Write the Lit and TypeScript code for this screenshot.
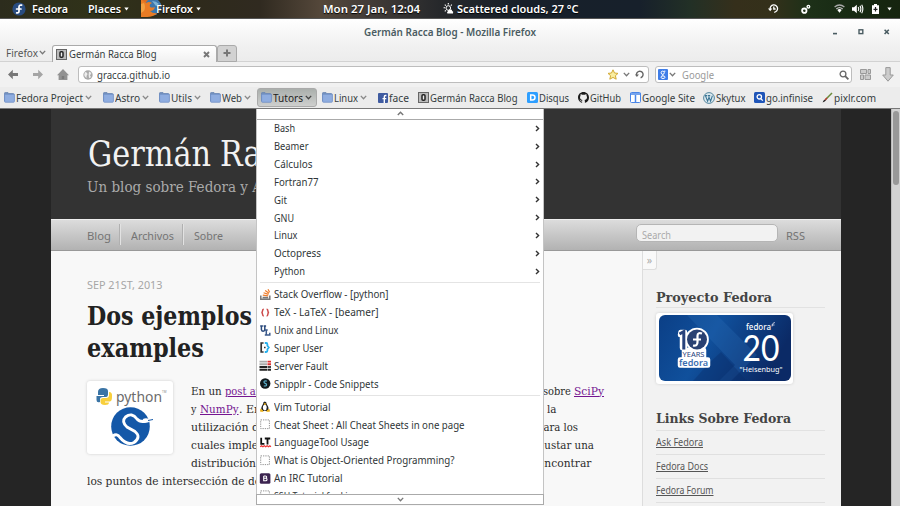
import { LitElement, html, css, svg, nothing } from "lit";
import { customElement, property, query } from "lit/decorators.js";

/** One line of text whose glyphs are condensed or widened to occupy a given width. */
@customElement("fit-text")
class FitText extends LitElement {
  @property({ type: Number }) w = 0;
  @query("span") box!: HTMLSpanElement;
  static styles = css`
    :host { display: inline-block; white-space: nowrap; flex: none; }
    span { display: inline-block; white-space: pre; transform-origin: 0 50%; text-decoration: inherit; }
  `;
  updated() {
    const natural = this.box.offsetWidth;
    if (!natural || !this.w) return;
    this.box.style.transform = `scaleX(${this.w / this.box.getBoundingClientRect().width})`;
    this.box.style.marginRight = `${this.w - natural}px`;
  }
  render() {
    return html`<span><slot></slot></span>`;
  }
}

const icon = (w: number, h: number, vb: string, body: unknown) =>
  html`<svg width=${w} height=${h} viewBox=${vb} fill="none">${body}</svg>`;

const chevron = (c = "#777") => icon(7, 5, "0 0 7 5", svg`<path d="M.8 .9 3.5 3.8 6.2 .9" stroke=${c} stroke-width="1.3"/>`);

const folder = icon(11, 11, "0 0 11 11", svg`
  <path d="M.5 2V1.2Q.5.6 1.1.6H4l.8 1h4.4q.6 0 .6.6V9H.5z" fill="#7692bd" stroke="#6784b2" stroke-width=".8"/>
  <path d="M.6 2.2h9.8v7.2q0 .9-.9.9H1.5q-.9 0-.9-.9z" fill="#8fade0" stroke="#6c8cc4" stroke-width=".7"/>`);
const octo = icon(11, 11, "0 0 11 11", svg`
  <rect x=".5" y=".5" width="10" height="10" fill="#bbb" stroke="#666"/>
  <rect x="4" y="2.8" width="3" height="5.4" rx="1" stroke="#222" stroke-width="1.5" fill="#eee"/>`);
const fb = icon(10, 10, "0 0 10 10", svg`
  <rect width="10" height="10" rx="1" fill="#3f5ba0"/><path d="M8.4 2.5H7.5Q6.3 2.5 6.3 3.7V10M4.5 5.6H8.3" stroke="#fff" stroke-width="1.4"/>`);
const disqus = icon(11, 11, "0 0 11 11", svg`
  <rect width="11" height="11" rx="1.5" fill="#2e9fff"/><path d="M3.7 3H5.3Q8 3 8 5.5T5.3 8H3.7z" stroke="#fff" stroke-width="1.5"/>`);
const github = icon(11, 11, "0 0 16 16", svg`
  <path fill="#1b1b1b" d="M8 0C3.58 0 0 3.58 0 8c0 3.54 2.29 6.53 5.47 7.59.4.07.55-.17.55-.38 0-.19-.01-.82-.01-1.49-2.01.37-2.53-.49-2.69-.94-.09-.23-.48-.94-.82-1.13-.28-.15-.68-.52-.01-.53.63-.01 1.08.58 1.23.82.72 1.21 1.87.87 2.33.66.07-.52.28-.87.51-1.07-1.78-.2-3.64-.89-3.64-3.95 0-.87.31-1.59.82-2.15-.08-.2-.36-1.02.08-2.12 0 0 .67-.21 2.2.82.64-.18 1.32-.27 2-.27s1.36.09 2 .27c1.53-1.04 2.2-.82 2.2-.82.44 1.1.16 1.92.08 2.12.51.56.82 1.27.82 2.15 0 3.07-1.87 3.75-3.65 3.95.29.25.54.73.54 1.48 0 1.07-.01 1.93-.01 2.2 0 .21.15.46.55.38A8.01 8.01 0 0 0 16 8c0-4.42-3.58-8-8-8z"/>`);
const gsite = icon(11, 11, "0 0 11 11", svg`
  <rect x=".5" y=".5" width="10" height="10" rx="1" fill="#fff" stroke="#4a86e8"/><path d="M0 2H11M5.5 3V10" stroke="#4a86e8" stroke-width="1.5"/>`);
const wp = icon(12, 12, "0 0 12 12", svg`
  <circle cx="6" cy="6" r="5.4" fill="#dbe9ef" stroke="#56879e" stroke-width="1"/><path d="M2.4 3.6 4.6 9.2 6 5.2 7.6 9.2 9.4 3.6M2 3.6H4.3M5 3.6H7.2" stroke="#3b7595" stroke-width="1.1"/>`);
const infin = icon(11, 11, "0 0 11 11", svg`
  <rect width="11" height="11" rx="1.5" fill="#1f55b8"/><circle cx="5.3" cy="4.8" r="2.2" stroke="#fff" stroke-width="1.3"/><path d="m6.8 6.6 2 2" stroke="#fff" stroke-width="1.3"/>`);
const pixlr = icon(11, 11, "0 0 11 11", svg`
  <path d="M.6 10.4Q1 8.2 3.6 7L4.2 8Q3 10 .6 10.4z" fill="#222"/><path d="M3.6 7.6 10 1" stroke="#6b8a3a" stroke-width="1.5"/><path d="M3 8 5 6" stroke="#b33" stroke-width="1.2"/>`);

type Mark = { cls?: string; ic: unknown; t: string; w: number; chev?: boolean };
const marks: Mark[] = [
  { ic: folder, t: "Fedora Project", w: 67, chev: true },
  { ic: folder, t: "Astro", w: 25, chev: true },
  { ic: folder, t: "Utils", w: 21, chev: true },
  { ic: folder, t: "Web", w: 20, chev: true },
  { ic: folder, t: "Tutors", w: 30, chev: true, cls: "open" },
  { ic: folder, t: "Linux", w: 24, chev: true },
  { ic: fb, t: "face", w: 20 },
  { ic: octo, t: "Germán Racca Blog", w: 87.5 },
  { ic: disqus, t: "Disqus", w: 30 },
  { ic: github, t: "GitHub", w: 31 },
  { ic: gsite, t: "Google Site", w: 53 },
  { ic: wp, t: "Skytux", w: 29.5 },
  { ic: infin, t: "go.infinise", w: 47 },
  { ic: pixlr, t: "pixlr.com", w: 42 },
];

const so = icon(11, 11, "0 0 11 11", svg`
  <path d="M.8 6.5V10.2H9.8V6.5M2.6 8.4H8.2" stroke="#777" stroke-width="1.5"/><path d="M2.8 6.1 8.2 6.9M3.6 3.8 8.5 5.4M5.2 1.4 9 4.2M8 .2 9.6 3.2" stroke="#ee7d2c" stroke-width="1.2"/>`);
const tex = icon(11, 11, "0 0 11 11", svg`
  <path d="M3.8 2.2Q2.6 2.2 2.6 3.6 2.6 5.4 1.4 5.6 2.6 5.8 2.6 7.6 2.6 9 3.8 9M6.6 2.2Q7.8 2.2 7.8 3.6 7.8 5.4 9 5.6 7.8 5.8 7.8 7.6 7.8 9 6.6 9" stroke="#cc4a4a" stroke-width="1.5"/>`);
const unix = icon(11, 11, "0 0 11 11", svg`
  <path d="M.2.9H2.9M1.4 1V4.6Q1.7 6.3 3.1 6.3 4.8 6.3 4.8 4.6V1M3.6.9H6.1" stroke="#2b4a7c" stroke-width="1.5"/><path d="M4.8 4.9H7.7M6.3 4.9V10M4.8 10H9.8V7.8" stroke="#3d5b8c" stroke-width="1.5"/>`);
const su = icon(11, 11, "0 0 11 11", svg`
  <path d="M3.6 1H1.2V10H3.6" stroke="#333" stroke-width="1.7"/><path d="M4 5.5H5.6" stroke="#333" stroke-width="1.3"/><path d="M4.8 1H6.2Q7.4 1 7.4 2.4V3.8L8.8 5.5 7.4 7.2V8.6Q7.4 10 6.2 10H4.8" stroke="#25b0ee" stroke-width="1.8"/>`);
const sf = icon(11, 11, "0 0 11 11", svg`
  <path d="M-.5 1.6H7M-.5 4.3H7" stroke="#aaa" stroke-width="1.9"/><path d="M-.5 7H7M-.5 9.7H7M7.5 9.7H11" stroke="#222" stroke-width="2.1"/><path d="M7.5 1.6H11M7.5 4.3H11" stroke="#d33" stroke-width="1.9"/><path d="M7.5 7H11" stroke="#444" stroke-width="2"/>`);
const snip = icon(11, 11, "0 0 11 11", svg`
  <circle cx="5.2" cy="5.5" r="5.2" fill="#10181c"/><path d="M6.8 3.1Q4 2.4 4 4 4 5 5.3 5.4 6.6 5.9 6.6 7 6.4 8.5 3.8 7.8" stroke="#5ab0cc" stroke-width="1.2"/>`);
const tux = icon(11, 11, "0 0 11 11", svg`
  <path d="M4.8.4Q6.7.4 6.7 3 8.7 5.5 8.5 8.5L7.2 10H2.8L1.2 8.6Q1.3 5.4 3 3 3 .4 4.8.4z" fill="#222"/><ellipse cx="4.8" cy="6.6" rx="1.9" ry="2.8" fill="#fff"/><path d="M.8 8 3.2 10.3H.5zM8.9 8 6.6 10.3H9.5zM4 2.8H5.8L4.9 3.8z" fill="#eab11c" stroke="#eab11c" stroke-width=".9"/>`);
const blank = icon(11, 11, "0 0 11 11", svg`<rect x=".7" y=".9" width="8.7" height="8.7" stroke="#888" stroke-width=".9" stroke-dasharray="1.3 1"/>`);
const lt = icon(11, 11, "0 0 11 11", svg`
  <path d="M1.2 .8V6.8H4.4M4.8 1.5H10.2M7.5 1.5V7.4" stroke="#111" stroke-width="1.8"/><path d="m.2 9.8 1.3-1 1.4 1 1.4-1 1.4 1 1.4-1 1.4 1 1.4-1 1 1" stroke="#e33" stroke-width="1.2"/>`);
const boot = icon(11, 11, "0 0 11 11", svg`
  <rect x="-.2" y=".2" width="10.6" height="10.6" rx="1.5" fill="#3c2450"/><path d="M3.7 3H5.5Q6.7 3 6.7 4.1T5.5 5.3H3.7V3V7.8H5.7Q7 7.8 7 6.5T5.7 5.3" stroke="#fff" stroke-width="1.1"/>`);

type Entry = [string, number, unknown?];
const groups: Entry[][] = [
  [["Bash", 21], ["Beamer", 34.5], ["Cálculos", 38.5], ["Fortran77", 44.5], ["Git", 13], ["GNU", 20], ["Linux", 23.5], ["Octopress", 47], ["Python", 31]],
  [["Stack Overflow - [python]", 114.5, so], ["TeX - LaTeX - [beamer]", 104.5, tex], ["Unix and Linux", 64.5, unix], ["Super User", 49, su], ["Server Fault", 54, sf], ["Snipplr - Code Snippets", 104.5, snip]],
  [["Vim Tutorial", 56.5, tux], ["Cheat Sheet : All Cheat Sheets in one page", 190.5, blank], ["LanguageTool Usage", 95, lt], ["What is Object-Oriented Programming?", 180.5, blank], ["An IRC Tutorial", 68.5, boot], ["SSH Tutorial for Linux", 89, blank]],
];

@customElement("app-root")
class AppRoot extends LitElement {
  static styles = css`
    * { box-sizing: border-box; }
    :host { display: flex; flex-direction: column; position: relative; width: 900px; height: 506px; overflow: hidden;
      font: 10.6px/14px "Noto Sans", sans-serif; color: #353c3e; background: #ededed; }
    svg { display: block; flex: none; overflow: visible; }
    .panel { height: 18.5px; flex: none; display: grid; align-items: center;
      grid-template-columns: 12px 20px 56px 53px 15px 167px 120px 325px 33px 33px 17.5px 20.5px 15px 1fr; color: #fff; font-weight: 600;
      background: linear-gradient(90deg, #2c2c1d 0, #303219 90px, #2e2a1b 190px, #302a20 260px, #54473a 320px, #423c38 370px, #26282b 440px, #17202a 520px, #17202b 640px, #223026 690px, #352f1b 735px, #34301a 770px, #1d3018 810px, #162912 860px, #16240f 900px);
      border-bottom: 1px solid #555; }
    .panel .cell { display: flex; align-items: center; gap: 3px; white-space: nowrap; font-size: 10.6px; text-shadow: 0 1px 1px #000; }
    .title { height: 26px; flex: none; display: grid; grid-template-columns: 364px 464px 26px 26px 1fr; align-items: center;
      background: linear-gradient(#fff, #f1f1f1); color: #4a5c62; font-weight: 600; font-size: 10.2px; }
    .tabs { height: 17.5px; flex: none; display: flex; background: linear-gradient(#f1f1f1, #ececec); border-bottom: 1px solid #d2d2d2; }
    .ff { width: 52px; padding-left: 6px; display: flex; align-items: center; gap: 1px; color: #555; }
    .tab { width: 165px; height: 18px; border: 1px solid #aaa; border-bottom: 0; border-radius: 3px 3px 0 0; display: flex; align-items: center; padding: 0 6px 0 3px; gap: 2px;
      background: linear-gradient(#fff, #f0f0f0); }
    .tab .x { margin-left: auto; }
    .plus { width: 20px; height: 17px; border: 1px solid #aaa; border-radius: 3px 3px 0 0; background: #d2d2d2; display: flex; align-items: center; justify-content: center; }
    .nav { height: 25px; flex: none; display: flex; align-items: center; background: #f1f1f1; }
    .ics { width: 78px; display: flex; align-items: center; padding-left: 7px; gap: 13px; }
    .field { height: 17px; border: 1px solid #bdbdbd; border-radius: 3px; background: #fff; display: flex; align-items: center; }
    .url { width: 571px; padding: 0 4px 0 4px; }
    .url fit-text { margin-left: 3.5px; }
    .url svg + svg { margin-left: 4px; }
    .url svg:last-child { margin-left: 5px; }
    .url fit-text + svg, .q fit-text + svg { margin-left: auto; }
    .q { width: 197px; margin-left: 6px; padding: 0 2px; gap: 1px; color: #999; }
    .q fit-text { margin-left: 5px; }
    .tools { display: flex; align-items: center; gap: 11px; margin-left: 8px; }
    .marks { height: 22px; flex: none; display: grid; align-items: center;
      grid-template-columns: 99px 56px 51px 50px 62px 56px 40px 109px 50.5px 52px 73.5px 50.5px 68px 1fr;
      padding-left: 4px; background: #ececec; border-bottom: 1px solid #777; }
    .mk { display: flex; align-items: center; gap: 1px; height: 19px; }
    .mk svg + svg, .mk fit-text + svg { margin-left: 1px; }
    .open { background: linear-gradient(#aaafac, #cecfce); border: 1px solid #aaa; border-radius: 3px; margin-left: -3px; width: 60px; padding-left: 3px; color: #222; }
    .view { flex: 1; display: flex; min-height: 0; background: #252525; padding-left: 51px; }
    .page { width: 790px; display: flex; flex-direction: column; }
    .bar { width: 9px; margin-left: auto; background: #d2d2d2; border-left: 1px solid #bbb; padding: 2px 1px 0; }
    .thumb { height: 74px; border-radius: 3px; background: #989898; }
    header { height: 110px; flex: none; background: #333; padding: 24px 0 0 37px; font-family: "DejaVu Serif Condensed", "DejaVu Serif", serif; color: #f2f2f2; overflow: hidden; }
    h1 { font-size: 34.5px; line-height: 42px; font-weight: 400; margin: 0; height: 42px; display: flex; gap: 9px; }
    .sub { font-size: 15px; line-height: 24px; color: #aaa; height: 24px; margin-left: -1px; }
    .menu { height: 31.5px; flex: none; display: flex; align-items: center; background: linear-gradient(#dcdcdc, #b2b2b2); border-bottom: 1px solid #999; border-top: 1px solid #eee;
      padding-left: 36px; font-size: 11.5px; color: #747474; }
    .menu .it { height: 21px; display: flex; align-items: center; padding-right: 9px; margin-right: 10px; border-right: 1px solid #e2e2e2; box-shadow: inset -1px 0 #b0b0b0; padding-top: 3px; }
    .menu .it.last { border: 0; box-shadow: none; margin: 0; padding-right: 0; }
    .search { margin-left: auto; width: 142px; height: 18px; margin-top: -4px; border: 1px solid #b5b5b5; border-radius: 5px; background: #f2f2f2; padding: 3px 0 0 5px; font-size: 10.4px; color: #aaa; line-height: 14px; }
    .rss { width: 63px; padding: 3px 0 0 8px; }
    .cols { flex: 1; display: flex; min-height: 0; }
    .post { width: 592px; background: #f8f8f8; padding: 26px 38px 0 36px; border-right: 1px solid #ddd; overflow: hidden; }
    .date { font-size: 11.4px; line-height: 15px; height: 15px; color: #a6a6a6; }
    h2 { font: 700 26.5px/32px "DejaVu Serif Condensed", "DejaVu Serif", serif; margin: 8px 0 0; color: #222; height: 64px; }
    h2 div { height: 32px; }
    .body { margin-top: 17px; font: 11.8px/18.2px "DejaVu Serif Condensed", "DejaVu Serif", serif; color: #2c2c2c; }
    .wrap { display: flex; gap: 18px; }
    .fig { width: 86px; height: 73px; flex: none; border-radius: 3px; background: #fff; box-shadow: 0 0 3px #ccc; }
    .lines { flex: 1; padding-top: 1px; }
    .ln { height: 18.1px; display: flex; justify-content: space-between; white-space: nowrap; }
    .ln.b { padding-right: 48px; } .ln.c { padding-right: 26px; } .ln.d { padding-right: 10px; } .ln.e { padding-right: 12px; }
    a, a fit-text { text-decoration: underline; }
    a { color: #751590; }
    .side { flex: 1; background: #f2f2f2; padding: 0 16px 0 0; }
    .tog { width: 14px; height: 19px; background: #f9f9f9; border: 1px solid #ddd; border-width: 0 1px 1px 0; border-radius: 0 0 3px 0; color: #aaa; display: grid; place-items: center; }
    .sec { padding-left: 13px; }
    h3 { font: 700 13.6px/18px "DejaVu Serif Condensed", "DejaVu Serif", serif; margin: 0; color: #444; border-bottom: 1px solid #e2e2e2; }
    .s1 { padding-top: 18px; height: 38px; }
    .banner { width: 137px; height: 71px; margin-top: 5px; padding: 2.5px; background: #fff; border-radius: 3px; box-shadow: 0 0 3px #ccc; }
    .s2 { margin-top: 25px; height: 22px; }
    .lk { height: 24.1px; border-bottom: 1px solid #e0e0e0; font-size: 10.4px; line-height: 22px; color: #555; }
    .lk fit-text { text-decoration: underline; }
    .pop { position: absolute; left: 256px; top: 109px; width: 288px; height: 396px; background: #fff; border: 1px solid #c4c4c4; border-top: 0; display: flex; flex-direction: column; }
    .scr { height: 10.5px; flex: none; display: grid; place-items: center; border-bottom: 1px solid #aaa; }
    .scr.dn { height: 11.5px; border: 1px solid #aaa; margin: 0 -1px -1px; }
    .list { flex: 1; overflow: hidden; min-height: 0; }
    .row { height: 17.83px; display: grid; grid-template-columns: 13.5px 1fr 8px; padding-left: 3px; align-items: center; color: #2f3638; }
    .sep { height: 5.5px; display: flex; align-items: center; padding: 0 3px; }
    .sep i { flex: 1; height: 1px; background: #e4e4e4; }
  `;

  private fit(t: string, w: number) {
    return html`<fit-text .w=${w}>${t}</fit-text>`;
  }

  private panel() {
    const tri = icon(5, 4, "0 0 5 4", svg`<path d="M.3.5H4.7L2.5 3.6z" fill="#fff"/>`);
    return html`<div class="panel">
      <span></span>
      ${icon(14, 14, "0 0 14 14", svg`<circle cx="7" cy="7" r="6.6" fill="#294c80"/><path d="M9.6 3.2Q7 2.7 7 5V9.2Q7 11.2 4.7 10.8M4.6 7H9" stroke="#fff" stroke-width="1.7" stroke-linecap="round"/>`)}
      <div class="cell">${this.fit("Fedora", 36)}</div>
      <div class="cell">${this.fit("Places", 33)}${tri}</div>
      ${icon(22, 17, "0 0 22 17", svg`<rect y="0" width="7" height="17" fill="#db6e26"/><circle cx="12" cy="7" r="8.5" fill="#3d77ad"/><path d="M1 0 5 3Q8 1 11 3 8 4 9 7 12 8 14 7 13 11 9 11 12 14 17 13 12 17 6 17H0V0z" fill="#e97c25"/><path d="M3 3Q5 7 3 11L0 13V4z" fill="#f3a142"/><path d="M11 1Q15 1 18 4L15 6z" fill="#7db2d3"/>`)}
      <div class="cell">${this.fit("Firefox", 37)}${tri}</div>
      <div class="cell">${this.fit("Mon 27 Jan, 12:04", 97)}</div>
      <div class="cell">
        ${icon(11, 11, "0 0 11 11", svg`<circle cx="5.3" cy="5" r="2.3" stroke="#fff" stroke-width="1"/><path d="M5.3 0V1.6M.6 4.8H2M1.8 1.6 2.8 2.6M8.8 1.6 7.8 2.6M1.8 8.3 2.8 7.3" stroke="#fff" stroke-width="1.1"/><path d="M4.4 10.4Q3.4 9 4.9 8.2 5.4 6 7.4 6.6 9 6.4 9.2 8 10.8 8.4 10 10.4z" fill="#fff"/>`)}
        ${this.fit("Scattered clouds, 27 °C", 121.5)}
      </div>
      ${icon(11, 11, "0 0 11 11", svg`<path d="M2.2 6.2A3.7 3.7 0 1 1 6.2 9.3M5.8 3.6V6H7.6" stroke="#fff" stroke-width="1.3"/><path d="M0 5.4H4.3L2.2 8.2z" fill="#fff"/>`)}
      ${icon(10, 10, "0 0 10 10", svg`<circle cx="3.3" cy="6.7" r="2.2" stroke="#fff" stroke-width="1.8"/><circle cx="7.4" cy="2.7" r="1.3" stroke="#fff" stroke-width="1.4"/>`)}
      ${icon(11, 9, "0 0 11 9", svg`<path d="M.6 3Q5.5-1 10.4 3" stroke="#aaa" stroke-width="1.3"/><path d="M2.3 4.9Q5.5 2.2 8.7 4.9" stroke="#bbb" stroke-width="1.3"/><path d="M3.3 6Q5.5 4.2 7.7 6L5.5 8.8z" fill="#fff"/>`)}
      ${icon(11, 10, "0 0 11 10", svg`<path d="M0 3.2H2L4.8.8V9.2L2 6.8H0z" fill="#fff"/><path d="M6.2 3Q7.4 5 6.2 7M8 1.8Q9.8 5 8 8.2M9.7.8Q12 5 9.7 9.2" stroke="#fff" stroke-width="1.1"/>`)}
      ${icon(7, 10, "0 0 7 10", svg`<path d="M2 0H5V1.2H7V10H0V1.2H2z" fill="#fff"/><path d="M3.5 3V7.6M1.5 5.4H5.5" stroke="#222" stroke-width="1.2"/>`)}
      ${tri}
    </div>`;
  }

  private chrome() {
    const arrow = (c: string, flip: boolean) => icon(12, 11, "0 0 12 11", svg`<path d="M5.8.8 1 5.5 5.8 10.2V7.1H11V3.9H5.8z" fill=${c} transform=${flip ? "matrix(-1 0 0 1 12 0)" : "matrix(1 0 0 1 0 0)"}/>`);
    return html`
      <div class="title"><span></span>${this.fit("Germán Racca Blog - Mozilla Firefox", 172)}
        ${icon(10, 6, "0 0 10 6", svg`<path d="M5 4.6H9" stroke="#4a5c62" stroke-width="1.6"/>`)}
        ${icon(10, 6, "0 0 10 6", svg`<rect x="5" y=".8" width="3.8" height="3.8" stroke="#4a5c62" stroke-width="1.4"/>`)}
        ${icon(10, 6, "0 0 10 6", svg`<path d="m4.6.8 4.2 4.2M8.8.8 4.6 5" stroke="#4a5c62" stroke-width="1.6"/>`)}
      </div>
      <div class="tabs">
        <div class="ff">${this.fit("Firefox", 32)}${chevron()}</div>
        <div class="tab">${octo}${this.fit("Germán Racca Blog", 87.5)}<span class="x">${icon(7, 7, "0 0 7 7", svg`<path d="M1 1 6 6M6 1 1 6" stroke="#777" stroke-width="1.9"/>`)}</span></div>
        <div class="plus">${icon(8, 8, "0 0 8 8", svg`<path d="M4 .5V7.5M.5 4H7.5" stroke="#777" stroke-width="2"/>`)}</div>
      </div>
      <div class="nav">
        <div class="ics">${arrow("#777", false)}${arrow("#a5a5a5", true)}
          ${icon(12, 11, "0 0 12 11", svg`<path d="M6 0 12 6.2H10.4V11H1.6V6.2H0z" fill="#929292"/><path d="M4.8 7H7.2V10H4.8z" fill="#7b7b7b"/>`)}</div>
        <div class="field url">
          ${icon(10, 10, "0 0 10 10", svg`<circle cx="5" cy="5" r="4.7" fill="#aaa"/><path d="M2 2Q4 2 4.6 4 3 6 3.6 8 1.6 7 1.2 5zM6 1.4 8.4 3 7 5.4 8 7Q7 8.2 6 8L5.6 5z" fill="#eee"/>`)}
          ${this.fit("gracca.github.io", 73)}
          ${icon(12, 11, "0 0 12 11", svg`<path d="M6 .8 7.5 4 11 4.4 8.4 6.7 9.2 10.2 6 8.4 2.8 10.2 3.6 6.7 1 4.4 4.5 4z" fill="#f9eda0" stroke="#d3aa34" stroke-width="1"/>`)}
          ${icon(7, 5, "0 0 7 5", svg`<path d="M.8.9 3.5 3.8 6.2.9" stroke="#777" stroke-width="1.3"/>`)}
          ${icon(9, 9, "0 0 9 9", svg`<path d="M1.6 5.4A3.3 3.3 0 1 1 5.6 7.7" stroke="#666" stroke-width="1.4"/><path d="M0 4.4H4L1.9 7z" fill="#666"/>`)}
        </div>
        <div class="field q">
          ${icon(10, 11, "0 0 10 11", svg`<rect width="10" height="11" rx="1" fill="#3f7de8"/><circle cx="4.7" cy="3.7" r="1.6" stroke="#fff" stroke-width="1"/><path d="M6 2.2H7.4M5 5.3Q3.4 6.3 5.4 6.7" stroke="#fff"/><ellipse cx="5" cy="8.2" rx="2" ry="1.3" stroke="#fff" stroke-width="1"/>`)}
          ${chevron()}${this.fit("Google", 32)}
          ${icon(10, 10, "0 0 10 10", svg`<circle cx="4" cy="4" r="2.9" stroke="#666" stroke-width="1.3"/><path d="M6.2 6.2 9.4 9.4" stroke="#666" stroke-width="1.8"/>`)}
        </div>
        <div class="tools">
          ${icon(11, 11, "0 0 11 11", svg`<path d="M.5.5H6.5V4.5H.5zM8 .5H10.5V4.5H8zM.5 6H3.5V10.5H.5zM5 6H10.5V10.5H5z" stroke="#999" fill="#ccc"/>`)}
          ${icon(12, 15, "0 0 12 15", svg`<path d="M3.8.6H8.2V8H11.3L6 14.2.7 8H3.8z" fill="#ccc" stroke="#999"/>`)}
        </div>
      </div>
      <div class="marks">${marks.map((m) => html`<div class="mk ${m.cls ?? ""}">${m.ic}${this.fit(m.t, m.w)}${m.chev ? chevron(m.cls ? "#444" : "#888") : nothing}</div>`)}</div>`;
  }

  private figure() {
    return html`<div class="fig"><svg width="86" height="73" viewBox="0 0 86 73" fill="none">
      <path d="M16 7Q11 7 11 11V14H17V15H9.5V19Q9.5 22 13 21V18Q13 16 16 16H19Q21 16 21 13V10Q21 7 16 7z" fill="#3a74a5"/>
      <path d="M18 24Q13 24 13.5 20V18.5Q14 17 16 17H19Q22 17 22 14V11Q25.6 11 25 16 25 20 23 20.5H18V21.5H22Q22 24 18 24z" fill="#f8cf3c"/>
      <text x="29" y="20.5" font-family="Noto Sans" font-size="14" textLength="46" lengthAdjust="spacingAndGlyphs" fill="#6c6c6c">python</text>
      <text x="75" y="12" font-family="Noto Sans" font-size="3" fill="#888">TM</text>
      <circle cx="43.5" cy="45.5" r="19.3" fill="#1458a8"/>
      <path d="M26 55Q30 52 33 56.5 40 65 47 61.5 54.5 56 48 50.5L40 46Q34 40.5 38.5 36 45 31 50 38 53 41.5 59 40" stroke="#fff" stroke-width="2.9"/>
      <ellipse cx="59" cy="39.5" rx="3.4" ry="2.2" fill="#fff"/><path d="m61 39.5 5-1" stroke="#1458a8" stroke-width="1"/>
    </svg></div>`;
  }

  private banner() {
    return html`<div class="banner"><svg width="132" height="66" viewBox="0 0 132 66" fill="none">
      <defs><linearGradient id="b" x1="0" y1="0" x2="1" y2=".3"><stop offset="0" stop-color="#0b3f86"/><stop offset=".45" stop-color="#10509c"/><stop offset="1" stop-color="#0b2a66"/></linearGradient></defs>
      <rect width="132" height="66" rx="6" fill="url(#b)"/>
      <path d="M28 0H58L98 40 72 66H60L76 50z" fill="#2a6cb5" opacity=".3"/><path d="M50 48 62 37 88 66H34z" fill="#082a66" opacity=".35"/>
      <g stroke="#fff" stroke-width="4.5" stroke-linejoin="round" fill="#fff">
        <path d="M21.5 17H26V33H23V20H21zM25 35H45V50H25z"/><circle cx="38" cy="24.5" r="9.6"/><path d="M21 44.5H49V50.5H21z"/>
      </g>
      <path d="M20.5 19 24.8 16.5V34.5" stroke="#27427c" stroke-width="3"/>
      <circle cx="38" cy="24.5" r="10" fill="#294172"/>
      <path d="M43 18.5Q38.5 17 38.5 21V27Q38.5 31.5 34 30.5M34 24.5H42" stroke="#fff" stroke-width="2.2"/>
      <g font-family="Noto Sans">
        <text x="23.5" y="42" font-size="7.8" textLength="22" lengthAdjust="spacingAndGlyphs" fill="#27427c">YEARS</text>
        <text x="20" y="50.8" font-size="9.2" font-weight="600" textLength="29" lengthAdjust="spacingAndGlyphs" fill="#3a6eb0">fedora</text>
        <text x="87" y="15.2" font-size="8" font-weight="500" textLength="25" lengthAdjust="spacingAndGlyphs" fill="#fff">fedora</text>
        <text x="80.5" y="57" font-size="7.8" textLength="43" lengthAdjust="spacingAndGlyphs" fill="#fff">"Heisenbug"</text>
      </g>
      <path d="M113 11.5Q113.5 7 116 7.5M112.5 10H115.5" stroke="#dde" stroke-width=".8"/>
      <text x="83.5" y="46" font-family="Lato, sans-serif" font-size="36" textLength="37" lengthAdjust="spacingAndGlyphs" fill="#fff">20</text>
    </svg></div>`;
  }

  private popup() {
    return html`<div class="pop">
      <div class="scr">${icon(7, 5, "0 0 7 5", svg`<path d="M.8 4.1 3.5 1.2 6.2 4.1" stroke="#777" stroke-width="1.4"/>`)}</div>
      <div class="list">${groups.map((g, i) => html`
        ${i ? html`<div class="sep"><i></i></div>` : nothing}
        ${g.map(([t, w, ic]) => html`<div class="row">${ic ?? html`<span></span>`}${this.fit(t, w)}
          ${ic ? nothing : icon(5, 7, "0 0 5 7", svg`<path d="M1 .9 3.6 3.5 1 6.1" stroke="#333" stroke-width="1.4"/>`)}</div>`)}`)}
      </div>
      <div class="scr dn">${chevron()}</div>
    </div>`;
  }

  render() {
    return html`${this.panel()}${this.chrome()}
      <div class="view">
        <div class="page">
          <header><h1>${this.fit("Germán", 123)}${this.fit("Racca", 93)}</h1><div class="sub">${this.fit("Un blog sobre Fedora y A", 175)}</div></header>
          <div class="menu">
            <div class="it">${this.fit("Blog", 24)}</div><div class="it">${this.fit("Archivos", 43)}</div><div class="it last">${this.fit("Sobre", 29)}</div>
            <div class="search">${this.fit("Search", 29)}</div><div class="rss">${this.fit("RSS", 19)}</div>
          </div>
          <div class="cols">
            <div class="post">
              <div class="date">${this.fit("SEP 21ST, 2013", 75.5)}</div>
              <h2><div>${this.fit("Dos ejemplos", 165)}</div><div>${this.fit("examples", 117)}</div></h2>
              <div class="body">
                <div class="wrap">${this.figure()}
                  <div class="lines">
                    <div class="ln"><span>${this.fit("En un ", 34)}<a>${this.fit("post an", 37)}</a></span><span>${this.fit("sobre ", 31)}<a>${this.fit("SciPy", 30)}</a></span></div>
                    <div class="ln b"><span>${this.fit("y ", 8.5)}<a>${this.fit("NumPy", 38.5)}</a>${this.fit(". En", 22)}</span>${this.fit("la", 9.5)}</div>
                    <div class="ln c">${this.fit("utilización d", 68)}${this.fit("para los", 41)}</div>
                    <div class="ln d">${this.fit("cuales imple", 67)}${this.fit("ajustar una", 59)}</div>
                    <div class="ln e">${this.fit("distribución", 65)}${this.fit("encontrar", 53.5)}</div>
                  </div>
                </div>
                <div class="ln">${this.fit("los puntos de intersección de de", 174)}</div>
              </div>
            </div>
            <div class="side">
              <div class="tog">»</div>
              <div class="sec">
                <h3 class="s1">${this.fit("Proyecto Fedora", 116)}</h3>
                ${this.banner()}
                <h3 class="s2">${this.fit("Links Sobre Fedora", 135)}</h3>
                <div class="lk">${this.fit("Ask Fedora", 47)}</div><div class="lk">${this.fit("Fedora Docs", 52)}</div><div class="lk">${this.fit("Fedora Forum", 57.5)}</div>
              </div>
            </div>
          </div>
        </div>
        <div class="bar"><div class="thumb"></div></div>
      </div>
      ${this.popup()}`;
  }
}
